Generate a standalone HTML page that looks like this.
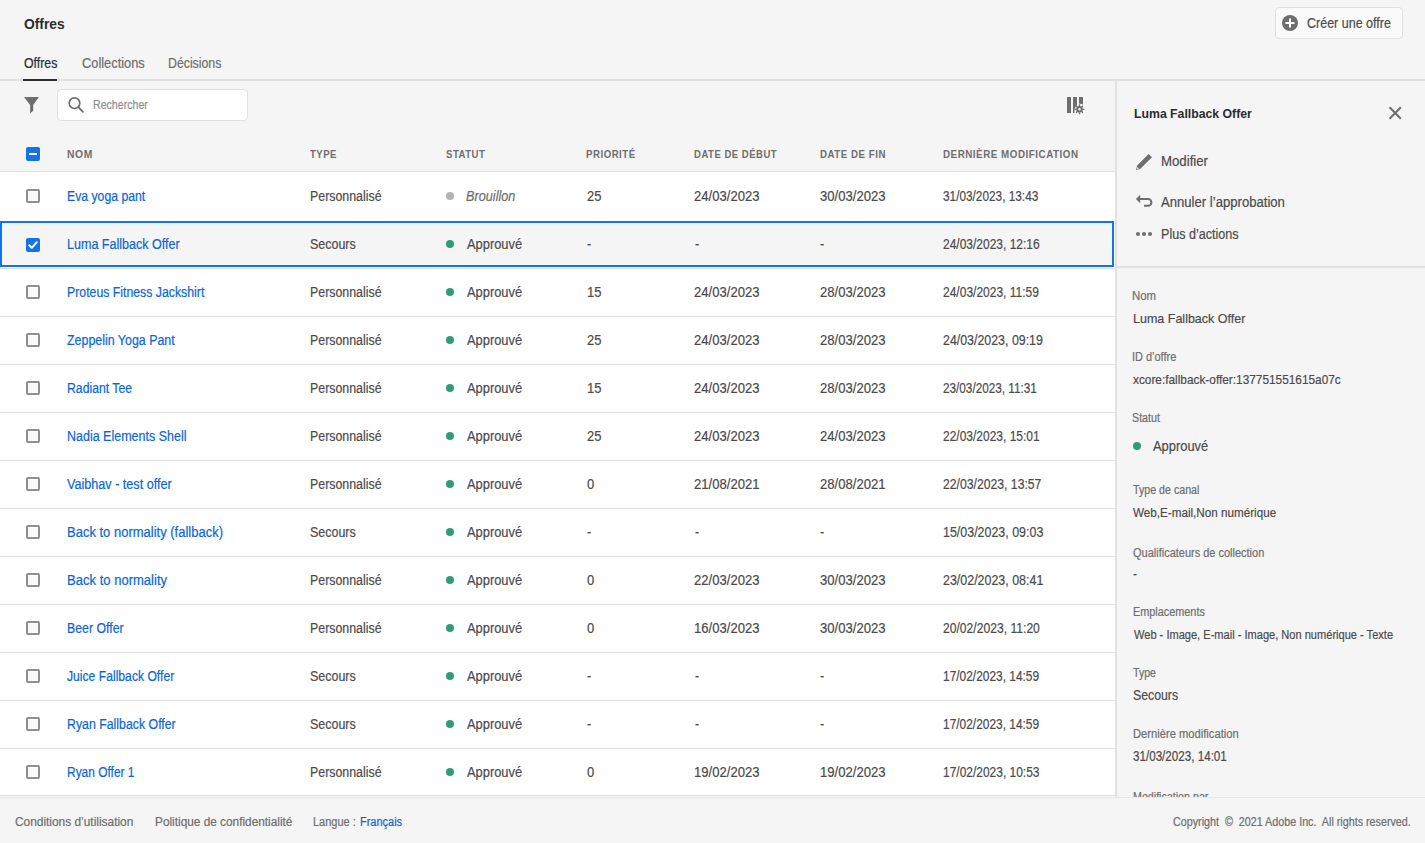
<!DOCTYPE html>
<html><head><meta charset="utf-8"><title>Offres</title>
<style>
html,body{margin:0;padding:0;}
body{width:1425px;height:843px;position:relative;overflow:hidden;background:#f5f5f5;font-family:"Liberation Sans",sans-serif;}
.r{position:absolute;}
.t{position:absolute;white-space:pre;transform-origin:0 0;display:block;}
</style></head><body>
<div class="r" style="left:0px;top:79px;width:1425px;height:2px;background:#e1e1e1;"></div>
<div class="r" style="left:23px;top:79px;width:34px;height:2px;background:#2c2c2c;"></div>
<div class="r" style="left:0px;top:172px;width:1115px;height:624px;background:#ffffff;"></div>
<div class="r" style="left:0px;top:796px;width:1115px;height:1px;background:#f5f5f5;"></div>
<div class="r" style="left:0px;top:171px;width:1115px;height:1px;background:#e1e1e1;"></div>
<div class="r" style="left:1115px;top:81px;width:2px;height:717px;background:#e1e1e1;"></div>
<div class="r" style="left:1117px;top:266px;width:308px;height:2px;background:#e1e1e1;"></div>
<div class="r" style="left:0px;top:797px;width:1425px;height:1px;background:#e8e8e8;"></div>
<span class="t" style="left:23.50px;top:16.00px;font-size:15px;line-height:15px;color:#2c2c2c;transform:scaleX(0.9227);font-weight:700;">Offres</span>
<span class="t" style="left:23.50px;top:56.00px;font-size:14px;line-height:14px;color:#2c2c2c;transform:scaleX(0.8816);-webkit-text-stroke:0.2px currentColor;">Offres</span>
<span class="t" style="left:81.70px;top:56.00px;font-size:14px;line-height:14px;color:#6e6e6e;transform:scaleX(0.9162);-webkit-text-stroke:0.2px currentColor;">Collections</span>
<span class="t" style="left:168.30px;top:56.00px;font-size:14px;line-height:14px;color:#6e6e6e;transform:scaleX(0.8787);-webkit-text-stroke:0.2px currentColor;">Décisions</span>
<div class="r" style="left:1275px;top:7px;width:128px;height:32px;background:#fafafa;border:1px solid #e1e1e1;border-radius:4px;box-sizing:border-box;"></div>
<svg class="r" style="left:1282px;top:15px" width="16" height="16" viewBox="0 0 16 16"><circle cx="8" cy="8" r="8" fill="#6e6e6e"/><rect x="7" y="3.5" width="2" height="9" fill="#fff"/><rect x="3.5" y="7" width="9" height="2" fill="#fff"/></svg>
<span class="t" style="left:1307.00px;top:16.00px;font-size:14px;line-height:14px;color:#4b4b4b;transform:scaleX(0.8936);-webkit-text-stroke:0.2px currentColor;">Créer une offre</span>
<svg class="r" style="left:24px;top:97px" width="16" height="17" viewBox="0 0 16 17"><path d="M0 0 H15 L9.2 8 V13.7 L6.1 16.5 V8 Z" fill="#6e6e6e"/></svg>
<div class="r" style="left:57px;top:89px;width:191px;height:32px;background:#ffffff;border:1px solid #e1e1e1;border-radius:4px;box-sizing:border-box;"></div>
<svg class="r" style="left:67px;top:96px" width="18" height="18" viewBox="0 0 18 18"><circle cx="7.5" cy="7.2" r="5.3" fill="none" stroke="#6e6e6e" stroke-width="1.7"/><path d="M11.4 11.1 L15.9 15.9" stroke="#6e6e6e" stroke-width="1.8" stroke-linecap="round"/></svg>
<span class="t" style="left:93.30px;top:98.00px;font-size:13px;line-height:13px;color:#8e8e8e;transform:scaleX(0.8162);-webkit-text-stroke:0.2px currentColor;">Rechercher</span>
<svg class="r" style="left:1066px;top:96px" width="20" height="19" viewBox="0 0 20 19">
<rect x="1" y="1" width="4" height="16" fill="#6e6e6e"/>
<path d="M7 1 H11 V9 L9.5 11 L8.5 13 V17 H7 Z" fill="#6e6e6e"/>
<path d="M13 1 H17 V8.6 L13 7.6 Z" fill="#6e6e6e"/>
<g transform="translate(13.5,13.3)">
<circle r="2.3" fill="none" stroke="#6e6e6e" stroke-width="2"/>
<path d="M0 -5 V-3 M0 3 V5 M-5 0 H-3 M3 0 H5 M-3.5 -3.5 L-2.2 -2.2 M3.5 3.5 L2.2 2.2 M-3.5 3.5 L-2.2 2.2 M3.5 -3.5 L2.2 -2.2" stroke="#6e6e6e" stroke-width="1.3"/>
</g></svg>
<div class="r" style="left:26px;top:147px;width:14px;height:14px;background:#1473e6;border-radius:2px"></div>
<div class="r" style="left:29px;top:153px;width:8px;height:2px;background:#ffffff;"></div>
<span class="t" style="left:67.40px;top:149.00px;font-size:11px;line-height:11px;color:#6e6e6e;transform:scaleX(0.9412);font-weight:700;letter-spacing:0.6px;">NOM</span>
<span class="t" style="left:309.60px;top:149.00px;font-size:11px;line-height:11px;color:#6e6e6e;transform:scaleX(0.8669);font-weight:700;letter-spacing:0.6px;">TYPE</span>
<span class="t" style="left:446.00px;top:149.00px;font-size:11px;line-height:11px;color:#6e6e6e;transform:scaleX(0.8667);font-weight:700;letter-spacing:0.6px;">STATUT</span>
<span class="t" style="left:586.30px;top:149.00px;font-size:11px;line-height:11px;color:#6e6e6e;transform:scaleX(0.8754);font-weight:700;letter-spacing:0.6px;">PRIORITÉ</span>
<span class="t" style="left:694.40px;top:149.00px;font-size:11px;line-height:11px;color:#6e6e6e;transform:scaleX(0.8638);font-weight:700;letter-spacing:0.6px;">DATE DE DÉBUT</span>
<span class="t" style="left:819.50px;top:149.00px;font-size:11px;line-height:11px;color:#6e6e6e;transform:scaleX(0.8811);font-weight:700;letter-spacing:0.6px;">DATE DE FIN</span>
<span class="t" style="left:943.30px;top:149.00px;font-size:11px;line-height:11px;color:#6e6e6e;transform:scaleX(0.8895);font-weight:700;letter-spacing:0.6px;">DERNIÈRE MODIFICATION</span>
<div class="r" style="left:26px;top:189px;width:14px;height:14px;border:2px solid #8e8e8e;border-radius:2px;box-sizing:border-box;background:#fafafa"></div>
<span class="t" style="left:67.40px;top:189.00px;font-size:14px;line-height:14px;color:#0d66d0;transform:scaleX(0.8744);-webkit-text-stroke:0.2px currentColor;">Eva yoga pant</span>
<span class="t" style="left:309.60px;top:189.00px;font-size:14px;line-height:14px;color:#4b4b4b;transform:scaleX(0.8840);-webkit-text-stroke:0.2px currentColor;">Personnalisé</span>
<div class="r" style="left:446px;top:192px;width:8px;height:8px;background:#b3b3b3;border-radius:50%;"></div>
<span class="t" style="left:465.70px;top:189.00px;font-size:14px;line-height:14px;color:#6e6e6e;transform:scaleX(0.9073);-webkit-text-stroke:0.2px currentColor;font-style:italic;">Brouillon</span>
<span class="t" style="left:586.60px;top:189.00px;font-size:14px;line-height:14px;color:#4b4b4b;transform:scaleX(0.9300);-webkit-text-stroke:0.2px currentColor;">25</span>
<span class="t" style="left:694.40px;top:189.00px;font-size:14px;line-height:14px;color:#4b4b4b;transform:scaleX(0.9350);-webkit-text-stroke:0.2px currentColor;">24/03/2023</span>
<span class="t" style="left:820.20px;top:189.00px;font-size:14px;line-height:14px;color:#4b4b4b;transform:scaleX(0.9350);-webkit-text-stroke:0.2px currentColor;">30/03/2023</span>
<span class="t" style="left:942.50px;top:189.00px;font-size:14px;line-height:14px;color:#4b4b4b;transform:scaleX(0.8442);-webkit-text-stroke:0.2px currentColor;">31/03/2023, 13:43</span>
<div class="r" style="left:0px;top:221px;width:1114px;height:46px;background:#f5f5f5;border:2px solid #1473e6;box-sizing:border-box;"></div>
<div class="r" style="left:0px;top:268px;width:1115px;height:1px;background:#e1e1e1;"></div>
<svg class="r" style="left:26px;top:238px" width="14" height="14" viewBox="0 0 14 14"><rect width="14" height="14" rx="2" fill="#1473e6"/><path d="M3.2 7.2 L5.8 9.8 L10.8 4.2" fill="none" stroke="#fff" stroke-width="2" stroke-linecap="round" stroke-linejoin="round"/></svg>
<span class="t" style="left:67.40px;top:237.00px;font-size:14px;line-height:14px;color:#0d66d0;transform:scaleX(0.8952);-webkit-text-stroke:0.2px currentColor;">Luma Fallback Offer</span>
<span class="t" style="left:309.60px;top:237.00px;font-size:14px;line-height:14px;color:#4b4b4b;transform:scaleX(0.8902);-webkit-text-stroke:0.2px currentColor;">Secours</span>
<div class="r" style="left:446px;top:240px;width:8px;height:8px;background:#2d9d78;border-radius:50%;"></div>
<span class="t" style="left:466.50px;top:237.00px;font-size:14px;line-height:14px;color:#4b4b4b;transform:scaleX(0.9200);-webkit-text-stroke:0.2px currentColor;">Approuvé</span>
<span class="t" style="left:587.00px;top:237.00px;font-size:14px;line-height:14px;color:#4b4b4b;transform:scaleX(0.9000);-webkit-text-stroke:0.2px currentColor;">-</span>
<span class="t" style="left:695.00px;top:237.00px;font-size:14px;line-height:14px;color:#4b4b4b;transform:scaleX(0.9000);-webkit-text-stroke:0.2px currentColor;">-</span>
<span class="t" style="left:820.00px;top:237.00px;font-size:14px;line-height:14px;color:#4b4b4b;transform:scaleX(0.9000);-webkit-text-stroke:0.2px currentColor;">-</span>
<span class="t" style="left:942.50px;top:237.00px;font-size:14px;line-height:14px;color:#4b4b4b;transform:scaleX(0.8566);-webkit-text-stroke:0.2px currentColor;">24/03/2023, 12:16</span>
<div class="r" style="left:0px;top:316px;width:1115px;height:1px;background:#e1e1e1;"></div>
<div class="r" style="left:26px;top:285px;width:14px;height:14px;border:2px solid #8e8e8e;border-radius:2px;box-sizing:border-box;background:#fafafa"></div>
<span class="t" style="left:67.40px;top:285.00px;font-size:14px;line-height:14px;color:#0d66d0;transform:scaleX(0.8782);-webkit-text-stroke:0.2px currentColor;">Proteus Fitness Jackshirt</span>
<span class="t" style="left:309.60px;top:285.00px;font-size:14px;line-height:14px;color:#4b4b4b;transform:scaleX(0.8840);-webkit-text-stroke:0.2px currentColor;">Personnalisé</span>
<div class="r" style="left:446px;top:288px;width:8px;height:8px;background:#2d9d78;border-radius:50%;"></div>
<span class="t" style="left:466.50px;top:285.00px;font-size:14px;line-height:14px;color:#4b4b4b;transform:scaleX(0.9200);-webkit-text-stroke:0.2px currentColor;">Approuvé</span>
<span class="t" style="left:586.60px;top:285.00px;font-size:14px;line-height:14px;color:#4b4b4b;transform:scaleX(0.9300);-webkit-text-stroke:0.2px currentColor;">15</span>
<span class="t" style="left:694.40px;top:285.00px;font-size:14px;line-height:14px;color:#4b4b4b;transform:scaleX(0.9350);-webkit-text-stroke:0.2px currentColor;">24/03/2023</span>
<span class="t" style="left:820.20px;top:285.00px;font-size:14px;line-height:14px;color:#4b4b4b;transform:scaleX(0.9350);-webkit-text-stroke:0.2px currentColor;">28/03/2023</span>
<span class="t" style="left:942.50px;top:285.00px;font-size:14px;line-height:14px;color:#4b4b4b;transform:scaleX(0.8580);-webkit-text-stroke:0.2px currentColor;">24/03/2023, 11:59</span>
<div class="r" style="left:0px;top:364px;width:1115px;height:1px;background:#e1e1e1;"></div>
<div class="r" style="left:26px;top:333px;width:14px;height:14px;border:2px solid #8e8e8e;border-radius:2px;box-sizing:border-box;background:#fafafa"></div>
<span class="t" style="left:67.40px;top:333.00px;font-size:14px;line-height:14px;color:#0d66d0;transform:scaleX(0.8869);-webkit-text-stroke:0.2px currentColor;">Zeppelin Yoga Pant</span>
<span class="t" style="left:309.60px;top:333.00px;font-size:14px;line-height:14px;color:#4b4b4b;transform:scaleX(0.8840);-webkit-text-stroke:0.2px currentColor;">Personnalisé</span>
<div class="r" style="left:446px;top:336px;width:8px;height:8px;background:#2d9d78;border-radius:50%;"></div>
<span class="t" style="left:466.50px;top:333.00px;font-size:14px;line-height:14px;color:#4b4b4b;transform:scaleX(0.9200);-webkit-text-stroke:0.2px currentColor;">Approuvé</span>
<span class="t" style="left:586.60px;top:333.00px;font-size:14px;line-height:14px;color:#4b4b4b;transform:scaleX(0.9300);-webkit-text-stroke:0.2px currentColor;">25</span>
<span class="t" style="left:694.40px;top:333.00px;font-size:14px;line-height:14px;color:#4b4b4b;transform:scaleX(0.9350);-webkit-text-stroke:0.2px currentColor;">24/03/2023</span>
<span class="t" style="left:820.20px;top:333.00px;font-size:14px;line-height:14px;color:#4b4b4b;transform:scaleX(0.9350);-webkit-text-stroke:0.2px currentColor;">28/03/2023</span>
<span class="t" style="left:942.50px;top:333.00px;font-size:14px;line-height:14px;color:#4b4b4b;transform:scaleX(0.8850);-webkit-text-stroke:0.2px currentColor;">24/03/2023, 09:19</span>
<div class="r" style="left:0px;top:412px;width:1115px;height:1px;background:#e1e1e1;"></div>
<div class="r" style="left:26px;top:381px;width:14px;height:14px;border:2px solid #8e8e8e;border-radius:2px;box-sizing:border-box;background:#fafafa"></div>
<span class="t" style="left:67.40px;top:381.00px;font-size:14px;line-height:14px;color:#0d66d0;transform:scaleX(0.8733);-webkit-text-stroke:0.2px currentColor;">Radiant Tee</span>
<span class="t" style="left:309.60px;top:381.00px;font-size:14px;line-height:14px;color:#4b4b4b;transform:scaleX(0.8840);-webkit-text-stroke:0.2px currentColor;">Personnalisé</span>
<div class="r" style="left:446px;top:384px;width:8px;height:8px;background:#2d9d78;border-radius:50%;"></div>
<span class="t" style="left:466.50px;top:381.00px;font-size:14px;line-height:14px;color:#4b4b4b;transform:scaleX(0.9200);-webkit-text-stroke:0.2px currentColor;">Approuvé</span>
<span class="t" style="left:586.60px;top:381.00px;font-size:14px;line-height:14px;color:#4b4b4b;transform:scaleX(0.9300);-webkit-text-stroke:0.2px currentColor;">15</span>
<span class="t" style="left:694.40px;top:381.00px;font-size:14px;line-height:14px;color:#4b4b4b;transform:scaleX(0.9350);-webkit-text-stroke:0.2px currentColor;">24/03/2023</span>
<span class="t" style="left:820.20px;top:381.00px;font-size:14px;line-height:14px;color:#4b4b4b;transform:scaleX(0.9350);-webkit-text-stroke:0.2px currentColor;">28/03/2023</span>
<span class="t" style="left:942.50px;top:381.00px;font-size:14px;line-height:14px;color:#4b4b4b;transform:scaleX(0.8393);-webkit-text-stroke:0.2px currentColor;">23/03/2023, 11:31</span>
<div class="r" style="left:0px;top:460px;width:1115px;height:1px;background:#e1e1e1;"></div>
<div class="r" style="left:26px;top:429px;width:14px;height:14px;border:2px solid #8e8e8e;border-radius:2px;box-sizing:border-box;background:#fafafa"></div>
<span class="t" style="left:67.40px;top:429.00px;font-size:14px;line-height:14px;color:#0d66d0;transform:scaleX(0.8925);-webkit-text-stroke:0.2px currentColor;">Nadia Elements Shell</span>
<span class="t" style="left:309.60px;top:429.00px;font-size:14px;line-height:14px;color:#4b4b4b;transform:scaleX(0.8840);-webkit-text-stroke:0.2px currentColor;">Personnalisé</span>
<div class="r" style="left:446px;top:432px;width:8px;height:8px;background:#2d9d78;border-radius:50%;"></div>
<span class="t" style="left:466.50px;top:429.00px;font-size:14px;line-height:14px;color:#4b4b4b;transform:scaleX(0.9200);-webkit-text-stroke:0.2px currentColor;">Approuvé</span>
<span class="t" style="left:586.60px;top:429.00px;font-size:14px;line-height:14px;color:#4b4b4b;transform:scaleX(0.9300);-webkit-text-stroke:0.2px currentColor;">25</span>
<span class="t" style="left:694.40px;top:429.00px;font-size:14px;line-height:14px;color:#4b4b4b;transform:scaleX(0.9350);-webkit-text-stroke:0.2px currentColor;">24/03/2023</span>
<span class="t" style="left:820.20px;top:429.00px;font-size:14px;line-height:14px;color:#4b4b4b;transform:scaleX(0.9350);-webkit-text-stroke:0.2px currentColor;">24/03/2023</span>
<span class="t" style="left:942.50px;top:429.00px;font-size:14px;line-height:14px;color:#4b4b4b;transform:scaleX(0.8566);-webkit-text-stroke:0.2px currentColor;">22/03/2023, 15:01</span>
<div class="r" style="left:0px;top:508px;width:1115px;height:1px;background:#e1e1e1;"></div>
<div class="r" style="left:26px;top:477px;width:14px;height:14px;border:2px solid #8e8e8e;border-radius:2px;box-sizing:border-box;background:#fafafa"></div>
<span class="t" style="left:67.40px;top:477.00px;font-size:14px;line-height:14px;color:#0d66d0;transform:scaleX(0.9009);-webkit-text-stroke:0.2px currentColor;">Vaibhav - test offer</span>
<span class="t" style="left:309.60px;top:477.00px;font-size:14px;line-height:14px;color:#4b4b4b;transform:scaleX(0.8840);-webkit-text-stroke:0.2px currentColor;">Personnalisé</span>
<div class="r" style="left:446px;top:480px;width:8px;height:8px;background:#2d9d78;border-radius:50%;"></div>
<span class="t" style="left:466.50px;top:477.00px;font-size:14px;line-height:14px;color:#4b4b4b;transform:scaleX(0.9200);-webkit-text-stroke:0.2px currentColor;">Approuvé</span>
<span class="t" style="left:586.60px;top:477.00px;font-size:14px;line-height:14px;color:#4b4b4b;transform:scaleX(0.9300);-webkit-text-stroke:0.2px currentColor;">0</span>
<span class="t" style="left:694.40px;top:477.00px;font-size:14px;line-height:14px;color:#4b4b4b;transform:scaleX(0.9350);-webkit-text-stroke:0.2px currentColor;">21/08/2021</span>
<span class="t" style="left:820.20px;top:477.00px;font-size:14px;line-height:14px;color:#4b4b4b;transform:scaleX(0.9350);-webkit-text-stroke:0.2px currentColor;">28/08/2021</span>
<span class="t" style="left:942.50px;top:477.00px;font-size:14px;line-height:14px;color:#4b4b4b;transform:scaleX(0.8717);-webkit-text-stroke:0.2px currentColor;">22/03/2023, 13:57</span>
<div class="r" style="left:0px;top:556px;width:1115px;height:1px;background:#e1e1e1;"></div>
<div class="r" style="left:26px;top:525px;width:14px;height:14px;border:2px solid #8e8e8e;border-radius:2px;box-sizing:border-box;background:#fafafa"></div>
<span class="t" style="left:67.40px;top:525.00px;font-size:14px;line-height:14px;color:#0d66d0;transform:scaleX(0.9280);-webkit-text-stroke:0.2px currentColor;">Back to normality (fallback)</span>
<span class="t" style="left:309.60px;top:525.00px;font-size:14px;line-height:14px;color:#4b4b4b;transform:scaleX(0.8902);-webkit-text-stroke:0.2px currentColor;">Secours</span>
<div class="r" style="left:446px;top:528px;width:8px;height:8px;background:#2d9d78;border-radius:50%;"></div>
<span class="t" style="left:466.50px;top:525.00px;font-size:14px;line-height:14px;color:#4b4b4b;transform:scaleX(0.9200);-webkit-text-stroke:0.2px currentColor;">Approuvé</span>
<span class="t" style="left:587.00px;top:525.00px;font-size:14px;line-height:14px;color:#4b4b4b;transform:scaleX(0.9000);-webkit-text-stroke:0.2px currentColor;">-</span>
<span class="t" style="left:695.00px;top:525.00px;font-size:14px;line-height:14px;color:#4b4b4b;transform:scaleX(0.9000);-webkit-text-stroke:0.2px currentColor;">-</span>
<span class="t" style="left:820.00px;top:525.00px;font-size:14px;line-height:14px;color:#4b4b4b;transform:scaleX(0.9000);-webkit-text-stroke:0.2px currentColor;">-</span>
<span class="t" style="left:942.50px;top:525.00px;font-size:14px;line-height:14px;color:#4b4b4b;transform:scaleX(0.8885);-webkit-text-stroke:0.2px currentColor;">15/03/2023, 09:03</span>
<div class="r" style="left:0px;top:604px;width:1115px;height:1px;background:#e1e1e1;"></div>
<div class="r" style="left:26px;top:573px;width:14px;height:14px;border:2px solid #8e8e8e;border-radius:2px;box-sizing:border-box;background:#fafafa"></div>
<span class="t" style="left:67.40px;top:573.00px;font-size:14px;line-height:14px;color:#0d66d0;transform:scaleX(0.9318);-webkit-text-stroke:0.2px currentColor;">Back to normality</span>
<span class="t" style="left:309.60px;top:573.00px;font-size:14px;line-height:14px;color:#4b4b4b;transform:scaleX(0.8840);-webkit-text-stroke:0.2px currentColor;">Personnalisé</span>
<div class="r" style="left:446px;top:576px;width:8px;height:8px;background:#2d9d78;border-radius:50%;"></div>
<span class="t" style="left:466.50px;top:573.00px;font-size:14px;line-height:14px;color:#4b4b4b;transform:scaleX(0.9200);-webkit-text-stroke:0.2px currentColor;">Approuvé</span>
<span class="t" style="left:586.60px;top:573.00px;font-size:14px;line-height:14px;color:#4b4b4b;transform:scaleX(0.9300);-webkit-text-stroke:0.2px currentColor;">0</span>
<span class="t" style="left:694.40px;top:573.00px;font-size:14px;line-height:14px;color:#4b4b4b;transform:scaleX(0.9350);-webkit-text-stroke:0.2px currentColor;">22/03/2023</span>
<span class="t" style="left:820.20px;top:573.00px;font-size:14px;line-height:14px;color:#4b4b4b;transform:scaleX(0.9350);-webkit-text-stroke:0.2px currentColor;">30/03/2023</span>
<span class="t" style="left:942.50px;top:573.00px;font-size:14px;line-height:14px;color:#4b4b4b;transform:scaleX(0.8885);-webkit-text-stroke:0.2px currentColor;">23/02/2023, 08:41</span>
<div class="r" style="left:0px;top:652px;width:1115px;height:1px;background:#e1e1e1;"></div>
<div class="r" style="left:26px;top:621px;width:14px;height:14px;border:2px solid #8e8e8e;border-radius:2px;box-sizing:border-box;background:#fafafa"></div>
<span class="t" style="left:67.40px;top:621.00px;font-size:14px;line-height:14px;color:#0d66d0;transform:scaleX(0.8800);-webkit-text-stroke:0.2px currentColor;">Beer Offer</span>
<span class="t" style="left:309.60px;top:621.00px;font-size:14px;line-height:14px;color:#4b4b4b;transform:scaleX(0.8840);-webkit-text-stroke:0.2px currentColor;">Personnalisé</span>
<div class="r" style="left:446px;top:624px;width:8px;height:8px;background:#2d9d78;border-radius:50%;"></div>
<span class="t" style="left:466.50px;top:621.00px;font-size:14px;line-height:14px;color:#4b4b4b;transform:scaleX(0.9200);-webkit-text-stroke:0.2px currentColor;">Approuvé</span>
<span class="t" style="left:586.60px;top:621.00px;font-size:14px;line-height:14px;color:#4b4b4b;transform:scaleX(0.9300);-webkit-text-stroke:0.2px currentColor;">0</span>
<span class="t" style="left:694.40px;top:621.00px;font-size:14px;line-height:14px;color:#4b4b4b;transform:scaleX(0.9350);-webkit-text-stroke:0.2px currentColor;">16/03/2023</span>
<span class="t" style="left:820.20px;top:621.00px;font-size:14px;line-height:14px;color:#4b4b4b;transform:scaleX(0.9350);-webkit-text-stroke:0.2px currentColor;">30/03/2023</span>
<span class="t" style="left:942.50px;top:621.00px;font-size:14px;line-height:14px;color:#4b4b4b;transform:scaleX(0.8661);-webkit-text-stroke:0.2px currentColor;">20/02/2023, 11:20</span>
<div class="r" style="left:0px;top:700px;width:1115px;height:1px;background:#e1e1e1;"></div>
<div class="r" style="left:26px;top:669px;width:14px;height:14px;border:2px solid #8e8e8e;border-radius:2px;box-sizing:border-box;background:#fafafa"></div>
<span class="t" style="left:67.40px;top:669.00px;font-size:14px;line-height:14px;color:#0d66d0;transform:scaleX(0.8685);-webkit-text-stroke:0.2px currentColor;">Juice Fallback Offer</span>
<span class="t" style="left:309.60px;top:669.00px;font-size:14px;line-height:14px;color:#4b4b4b;transform:scaleX(0.8902);-webkit-text-stroke:0.2px currentColor;">Secours</span>
<div class="r" style="left:446px;top:672px;width:8px;height:8px;background:#2d9d78;border-radius:50%;"></div>
<span class="t" style="left:466.50px;top:669.00px;font-size:14px;line-height:14px;color:#4b4b4b;transform:scaleX(0.9200);-webkit-text-stroke:0.2px currentColor;">Approuvé</span>
<span class="t" style="left:587.00px;top:669.00px;font-size:14px;line-height:14px;color:#4b4b4b;transform:scaleX(0.9000);-webkit-text-stroke:0.2px currentColor;">-</span>
<span class="t" style="left:695.00px;top:669.00px;font-size:14px;line-height:14px;color:#4b4b4b;transform:scaleX(0.9000);-webkit-text-stroke:0.2px currentColor;">-</span>
<span class="t" style="left:820.00px;top:669.00px;font-size:14px;line-height:14px;color:#4b4b4b;transform:scaleX(0.9000);-webkit-text-stroke:0.2px currentColor;">-</span>
<span class="t" style="left:942.50px;top:669.00px;font-size:14px;line-height:14px;color:#4b4b4b;transform:scaleX(0.8513);-webkit-text-stroke:0.2px currentColor;">17/02/2023, 14:59</span>
<div class="r" style="left:0px;top:748px;width:1115px;height:1px;background:#e1e1e1;"></div>
<div class="r" style="left:26px;top:717px;width:14px;height:14px;border:2px solid #8e8e8e;border-radius:2px;box-sizing:border-box;background:#fafafa"></div>
<span class="t" style="left:67.40px;top:717.00px;font-size:14px;line-height:14px;color:#0d66d0;transform:scaleX(0.8806);-webkit-text-stroke:0.2px currentColor;">Ryan Fallback Offer</span>
<span class="t" style="left:309.60px;top:717.00px;font-size:14px;line-height:14px;color:#4b4b4b;transform:scaleX(0.8902);-webkit-text-stroke:0.2px currentColor;">Secours</span>
<div class="r" style="left:446px;top:720px;width:8px;height:8px;background:#2d9d78;border-radius:50%;"></div>
<span class="t" style="left:466.50px;top:717.00px;font-size:14px;line-height:14px;color:#4b4b4b;transform:scaleX(0.9200);-webkit-text-stroke:0.2px currentColor;">Approuvé</span>
<span class="t" style="left:587.00px;top:717.00px;font-size:14px;line-height:14px;color:#4b4b4b;transform:scaleX(0.9000);-webkit-text-stroke:0.2px currentColor;">-</span>
<span class="t" style="left:695.00px;top:717.00px;font-size:14px;line-height:14px;color:#4b4b4b;transform:scaleX(0.9000);-webkit-text-stroke:0.2px currentColor;">-</span>
<span class="t" style="left:820.00px;top:717.00px;font-size:14px;line-height:14px;color:#4b4b4b;transform:scaleX(0.9000);-webkit-text-stroke:0.2px currentColor;">-</span>
<span class="t" style="left:942.50px;top:717.00px;font-size:14px;line-height:14px;color:#4b4b4b;transform:scaleX(0.8513);-webkit-text-stroke:0.2px currentColor;">17/02/2023, 14:59</span>
<div class="r" style="left:0px;top:795px;width:1115px;height:1px;background:#e1e1e1;"></div>
<div class="r" style="left:26px;top:765px;width:14px;height:14px;border:2px solid #8e8e8e;border-radius:2px;box-sizing:border-box;background:#fafafa"></div>
<span class="t" style="left:67.40px;top:765.00px;font-size:14px;line-height:14px;color:#0d66d0;transform:scaleX(0.8532);-webkit-text-stroke:0.2px currentColor;">Ryan Offer 1</span>
<span class="t" style="left:309.60px;top:765.00px;font-size:14px;line-height:14px;color:#4b4b4b;transform:scaleX(0.8840);-webkit-text-stroke:0.2px currentColor;">Personnalisé</span>
<div class="r" style="left:446px;top:768px;width:8px;height:8px;background:#2d9d78;border-radius:50%;"></div>
<span class="t" style="left:466.50px;top:765.00px;font-size:14px;line-height:14px;color:#4b4b4b;transform:scaleX(0.9200);-webkit-text-stroke:0.2px currentColor;">Approuvé</span>
<span class="t" style="left:586.60px;top:765.00px;font-size:14px;line-height:14px;color:#4b4b4b;transform:scaleX(0.9300);-webkit-text-stroke:0.2px currentColor;">0</span>
<span class="t" style="left:694.40px;top:765.00px;font-size:14px;line-height:14px;color:#4b4b4b;transform:scaleX(0.9350);-webkit-text-stroke:0.2px currentColor;">19/02/2023</span>
<span class="t" style="left:820.20px;top:765.00px;font-size:14px;line-height:14px;color:#4b4b4b;transform:scaleX(0.9350);-webkit-text-stroke:0.2px currentColor;">19/02/2023</span>
<span class="t" style="left:942.50px;top:765.00px;font-size:14px;line-height:14px;color:#4b4b4b;transform:scaleX(0.8549);-webkit-text-stroke:0.2px currentColor;">17/02/2023, 10:53</span>
<span class="t" style="left:1133.70px;top:107.00px;font-size:13px;line-height:13px;color:#2c2c2c;transform:scaleX(0.9432);font-weight:700;">Luma Fallback Offer</span>
<svg class="r" style="left:1388px;top:106px" width="14" height="14" viewBox="0 0 14 14"><path d="M2.3 2.1 L12.1 11.9 M12.1 2.1 L2.3 11.9" stroke="#6e6e6e" stroke-width="2.1" stroke-linecap="square"/></svg>
<svg class="r" style="left:1135px;top:153px" width="18" height="17" viewBox="0 0 18 17"><path d="M13.67 1.07 L16.93 4.33 L5.46 15.8 L1 17 L2.2 12.54 Z" fill="#6e6e6e"/><path d="M2.5 13.9 L4.1 15.5 L1.9 16.1 Z" fill="#f5f5f5"/></svg>
<span class="t" style="left:1160.60px;top:154.00px;font-size:14px;line-height:14px;color:#4b4b4b;transform:scaleX(0.9440);-webkit-text-stroke:0.2px currentColor;">Modifier</span>
<svg class="r" style="left:1135px;top:194px" width="18" height="16" viewBox="0 0 18 16"><path d="M0.9 5 L5.2 0.8 V9.2 Z" fill="#6e6e6e"/><path d="M5 5 H13 A3.4 3.4 0 0 1 13 11.8 H9" fill="none" stroke="#6e6e6e" stroke-width="2"/></svg>
<span class="t" style="left:1160.60px;top:195.00px;font-size:14px;line-height:14px;color:#4b4b4b;transform:scaleX(0.9364);-webkit-text-stroke:0.2px currentColor;">Annuler l’approbation</span>
<div class="r" style="left:1136.1px;top:231.7px;width:4px;height:4px;background:#6e6e6e;border-radius:50%;"></div>
<div class="r" style="left:1142px;top:231.7px;width:4px;height:4px;background:#6e6e6e;border-radius:50%;"></div>
<div class="r" style="left:1147.9px;top:231.7px;width:4px;height:4px;background:#6e6e6e;border-radius:50%;"></div>
<span class="t" style="left:1160.60px;top:227.00px;font-size:14px;line-height:14px;color:#4b4b4b;transform:scaleX(0.8988);-webkit-text-stroke:0.2px currentColor;">Plus d’actions</span>
<span class="t" style="left:1132.30px;top:290.00px;font-size:12px;line-height:12px;color:#6e6e6e;transform:scaleX(0.9480);-webkit-text-stroke:0.2px currentColor;">Nom</span>
<span class="t" style="left:1133.00px;top:312.00px;font-size:13px;line-height:13px;color:#4b4b4b;transform:scaleX(0.9619);-webkit-text-stroke:0.2px currentColor;">Luma Fallback Offer</span>
<span class="t" style="left:1132.30px;top:351.00px;font-size:12px;line-height:12px;color:#6e6e6e;transform:scaleX(0.9122);-webkit-text-stroke:0.2px currentColor;">ID d’offre</span>
<span class="t" style="left:1133.00px;top:373.00px;font-size:13px;line-height:13px;color:#4b4b4b;transform:scaleX(0.9105);-webkit-text-stroke:0.2px currentColor;">xcore:fallback-offer:137751551615a07c</span>
<span class="t" style="left:1132.30px;top:412.00px;font-size:12px;line-height:12px;color:#6e6e6e;transform:scaleX(0.8906);-webkit-text-stroke:0.2px currentColor;">Statut</span>
<div class="r" style="left:1133px;top:441.6px;width:8px;height:8px;background:#2d9d78;border-radius:50%;"></div>
<span class="t" style="left:1153.20px;top:439.00px;font-size:14px;line-height:14px;color:#4b4b4b;transform:scaleX(0.9217);-webkit-text-stroke:0.2px currentColor;">Approuvé</span>
<span class="t" style="left:1132.80px;top:484.00px;font-size:12px;line-height:12px;color:#6e6e6e;transform:scaleX(0.8880);-webkit-text-stroke:0.2px currentColor;">Type de canal</span>
<span class="t" style="left:1133.00px;top:507.00px;font-size:12.5px;line-height:12.5px;color:#4b4b4b;transform:scaleX(0.9340);-webkit-text-stroke:0.2px currentColor;">Web,E-mail,Non numérique</span>
<span class="t" style="left:1132.80px;top:547.00px;font-size:12px;line-height:12px;color:#6e6e6e;transform:scaleX(0.9154);-webkit-text-stroke:0.2px currentColor;">Qualificateurs de collection</span>
<span class="t" style="left:1133.00px;top:567.00px;font-size:13px;line-height:13px;color:#4b4b4b;transform:scaleX(0.9000);-webkit-text-stroke:0.2px currentColor;">-</span>
<span class="t" style="left:1132.80px;top:606.00px;font-size:12px;line-height:12px;color:#6e6e6e;transform:scaleX(0.9051);-webkit-text-stroke:0.2px currentColor;">Emplacements</span>
<span class="t" style="left:1133.60px;top:629.00px;font-size:12.5px;line-height:12.5px;color:#4b4b4b;transform:scaleX(0.8850);-webkit-text-stroke:0.2px currentColor;">Web - Image, E-mail - Image, Non numérique - Texte</span>
<span class="t" style="left:1133.00px;top:667.00px;font-size:12px;line-height:12px;color:#6e6e6e;transform:scaleX(0.8846);-webkit-text-stroke:0.2px currentColor;">Type</span>
<span class="t" style="left:1133.00px;top:688.00px;font-size:14px;line-height:14px;color:#4b4b4b;transform:scaleX(0.8765);-webkit-text-stroke:0.2px currentColor;">Secours</span>
<span class="t" style="left:1132.60px;top:728.00px;font-size:12px;line-height:12px;color:#6e6e6e;transform:scaleX(0.9319);-webkit-text-stroke:0.2px currentColor;">Dernière modification</span>
<span class="t" style="left:1132.60px;top:749.00px;font-size:14px;line-height:14px;color:#4b4b4b;transform:scaleX(0.8310);-webkit-text-stroke:0.2px currentColor;">31/03/2023, 14:01</span>
<div class="r" style="left:1117px;top:781px;width:308px;height:16px;overflow:hidden">
<span class="t" style="left:15.60px;top:10.00px;font-size:12px;line-height:12px;color:#6e6e6e;transform:scaleX(0.8900);-webkit-text-stroke:0.2px currentColor;">Modification par</span>
</div>
<span class="t" style="left:14.70px;top:816.00px;font-size:12px;line-height:12px;color:#6e6e6e;transform:scaleX(0.9908);-webkit-text-stroke:0.2px currentColor;">Conditions d’utilisation</span>
<span class="t" style="left:154.70px;top:816.00px;font-size:12px;line-height:12px;color:#6e6e6e;transform:scaleX(0.9857);-webkit-text-stroke:0.2px currentColor;">Politique de confidentialité</span>
<span class="t" style="left:313.00px;top:816.00px;font-size:12px;line-height:12px;color:#6e6e6e;transform:scaleX(0.9149);-webkit-text-stroke:0.2px currentColor;">Langue :</span>
<span class="t" style="left:360.20px;top:816.00px;font-size:12px;line-height:12px;color:#0d66d0;transform:scaleX(0.9152);-webkit-text-stroke:0.2px currentColor;">Français</span>
<span class="t" style="left:1172.70px;top:816.00px;font-size:12px;line-height:12px;color:#6e6e6e;transform:scaleX(0.8951);-webkit-text-stroke:0.2px currentColor;">Copyright  ©  2021 Adobe Inc.  All rights reserved.</span>
</body></html>
